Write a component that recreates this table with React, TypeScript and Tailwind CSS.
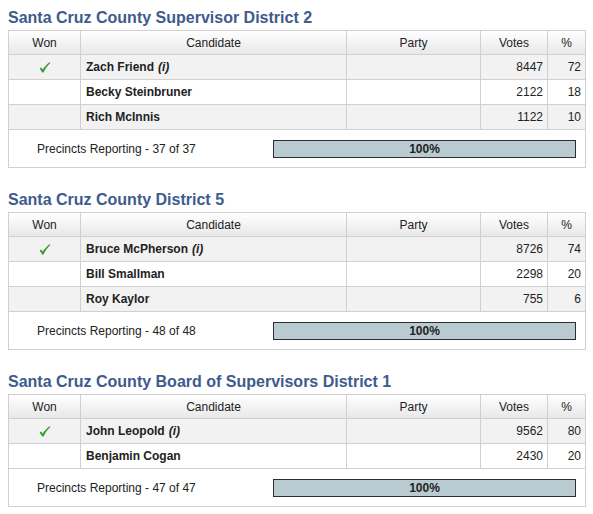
import React from "react";

type Cand = { name: string; inc?: boolean; won?: boolean; votes: number; pct: number };
type Race = { title: string; cands: Cand[]; precincts: string };

const races: Race[] = [
  {
    title: "Santa Cruz County Supervisor District 2",
    cands: [
      { name: "Zach Friend", inc: true, won: true, votes: 8447, pct: 72 },
      { name: "Becky Steinbruner", votes: 2122, pct: 18 },
      { name: "Rich McInnis", votes: 1122, pct: 10 },
    ],
    precincts: "Precincts Reporting - 37 of 37",
  },
  {
    title: "Santa Cruz County District 5",
    cands: [
      { name: "Bruce McPherson", inc: true, won: true, votes: 8726, pct: 74 },
      { name: "Bill Smallman", votes: 2298, pct: 20 },
      { name: "Roy Kaylor", votes: 755, pct: 6 },
    ],
    precincts: "Precincts Reporting - 48 of 48",
  },
  {
    title: "Santa Cruz County Board of Supervisors District 1",
    cands: [
      { name: "John Leopold", inc: true, won: true, votes: 9562, pct: 80 },
      { name: "Benjamin Cogan", votes: 2430, pct: 20 },
    ],
    precincts: "Precincts Reporting - 47 of 47",
  },
];

function Check() {
  return (
    <svg width="12" height="11" viewBox="0 0 12 11">
      <path d="M0.6 6.4 L2.1 5.5 L3.7 7.6 C5.5 4.8 7.8 2.2 10.6 0.2 L11.4 0.9 C8.6 3.4 6.3 6.6 4.5 10.4 L3.2 10.4 Z" fill="#3a9c32" />
    </svg>
  );
}

const cols = "grid grid-cols-[72px_266px_134px_67px_37px]";

function RaceTable({ race, first }: { race: Race; first: boolean }) {
  return (
    <div className={first ? "" : "mt-[14px]"}>
      <h2 className="pt-[8px] mb-[2px] pl-[8px] text-[16px] leading-[20px] font-bold text-[#3e5b8e]">{race.title}</h2>
      <div className="ml-[8px] w-[578px] border border-[#d0d0d0] text-[12px] text-[#222]">
        <div className={`${cols} h-[24px] border-b border-[#d0d0d0] bg-gradient-to-b from-white to-[#e8e8e8]`}>
          <div className="flex items-center justify-center border-r border-[#d0d0d0]">Won</div>
          <div className="flex items-center justify-center border-r border-[#d0d0d0]">Candidate</div>
          <div className="flex items-center justify-center border-r border-[#d0d0d0]">Party</div>
          <div className="flex items-center justify-center border-r border-[#d0d0d0]">Votes</div>
          <div className="flex items-center justify-center">%</div>
        </div>
        {race.cands.map((c, i) => (
          <div key={c.name} className={`${cols} h-[25px] border-b border-[#d0d0d0] ${i % 2 === 0 ? "bg-[#f2f2f2]" : "bg-white"}`}>
            <div className="flex items-center justify-center border-r border-[#d0d0d0]">{c.won ? <Check /> : null}</div>
            <div className="flex items-center pl-[5px] font-bold border-r border-[#d0d0d0]">
              {c.name}
              {c.inc ? <i className="ml-[4px]">(i)</i> : null}
            </div>
            <div className="border-r border-[#d0d0d0]"></div>
            <div className="flex items-center justify-end pr-[4px] border-r border-[#d0d0d0]">{c.votes}</div>
            <div className="flex items-center justify-end pr-[4px]">{c.pct}</div>
          </div>
        ))}
        <div className="flex h-[37px] items-center justify-between pl-[28px] pr-[9px] bg-white">
          <span>{race.precincts}</span>
          <div className="flex h-[18px] w-[303px] items-center justify-center border border-[#2e2e2e] bg-[#b9cbd1] font-bold">100%</div>
        </div>
      </div>
    </div>
  );
}

export default function App() {
  return (
    <div className="w-[593px] h-[514px] bg-white font-['Liberation_Sans',Arial,sans-serif]">
      {races.map((r, i) => (
        <RaceTable key={r.title} race={r} first={i === 0} />
      ))}
    </div>
  );
}
